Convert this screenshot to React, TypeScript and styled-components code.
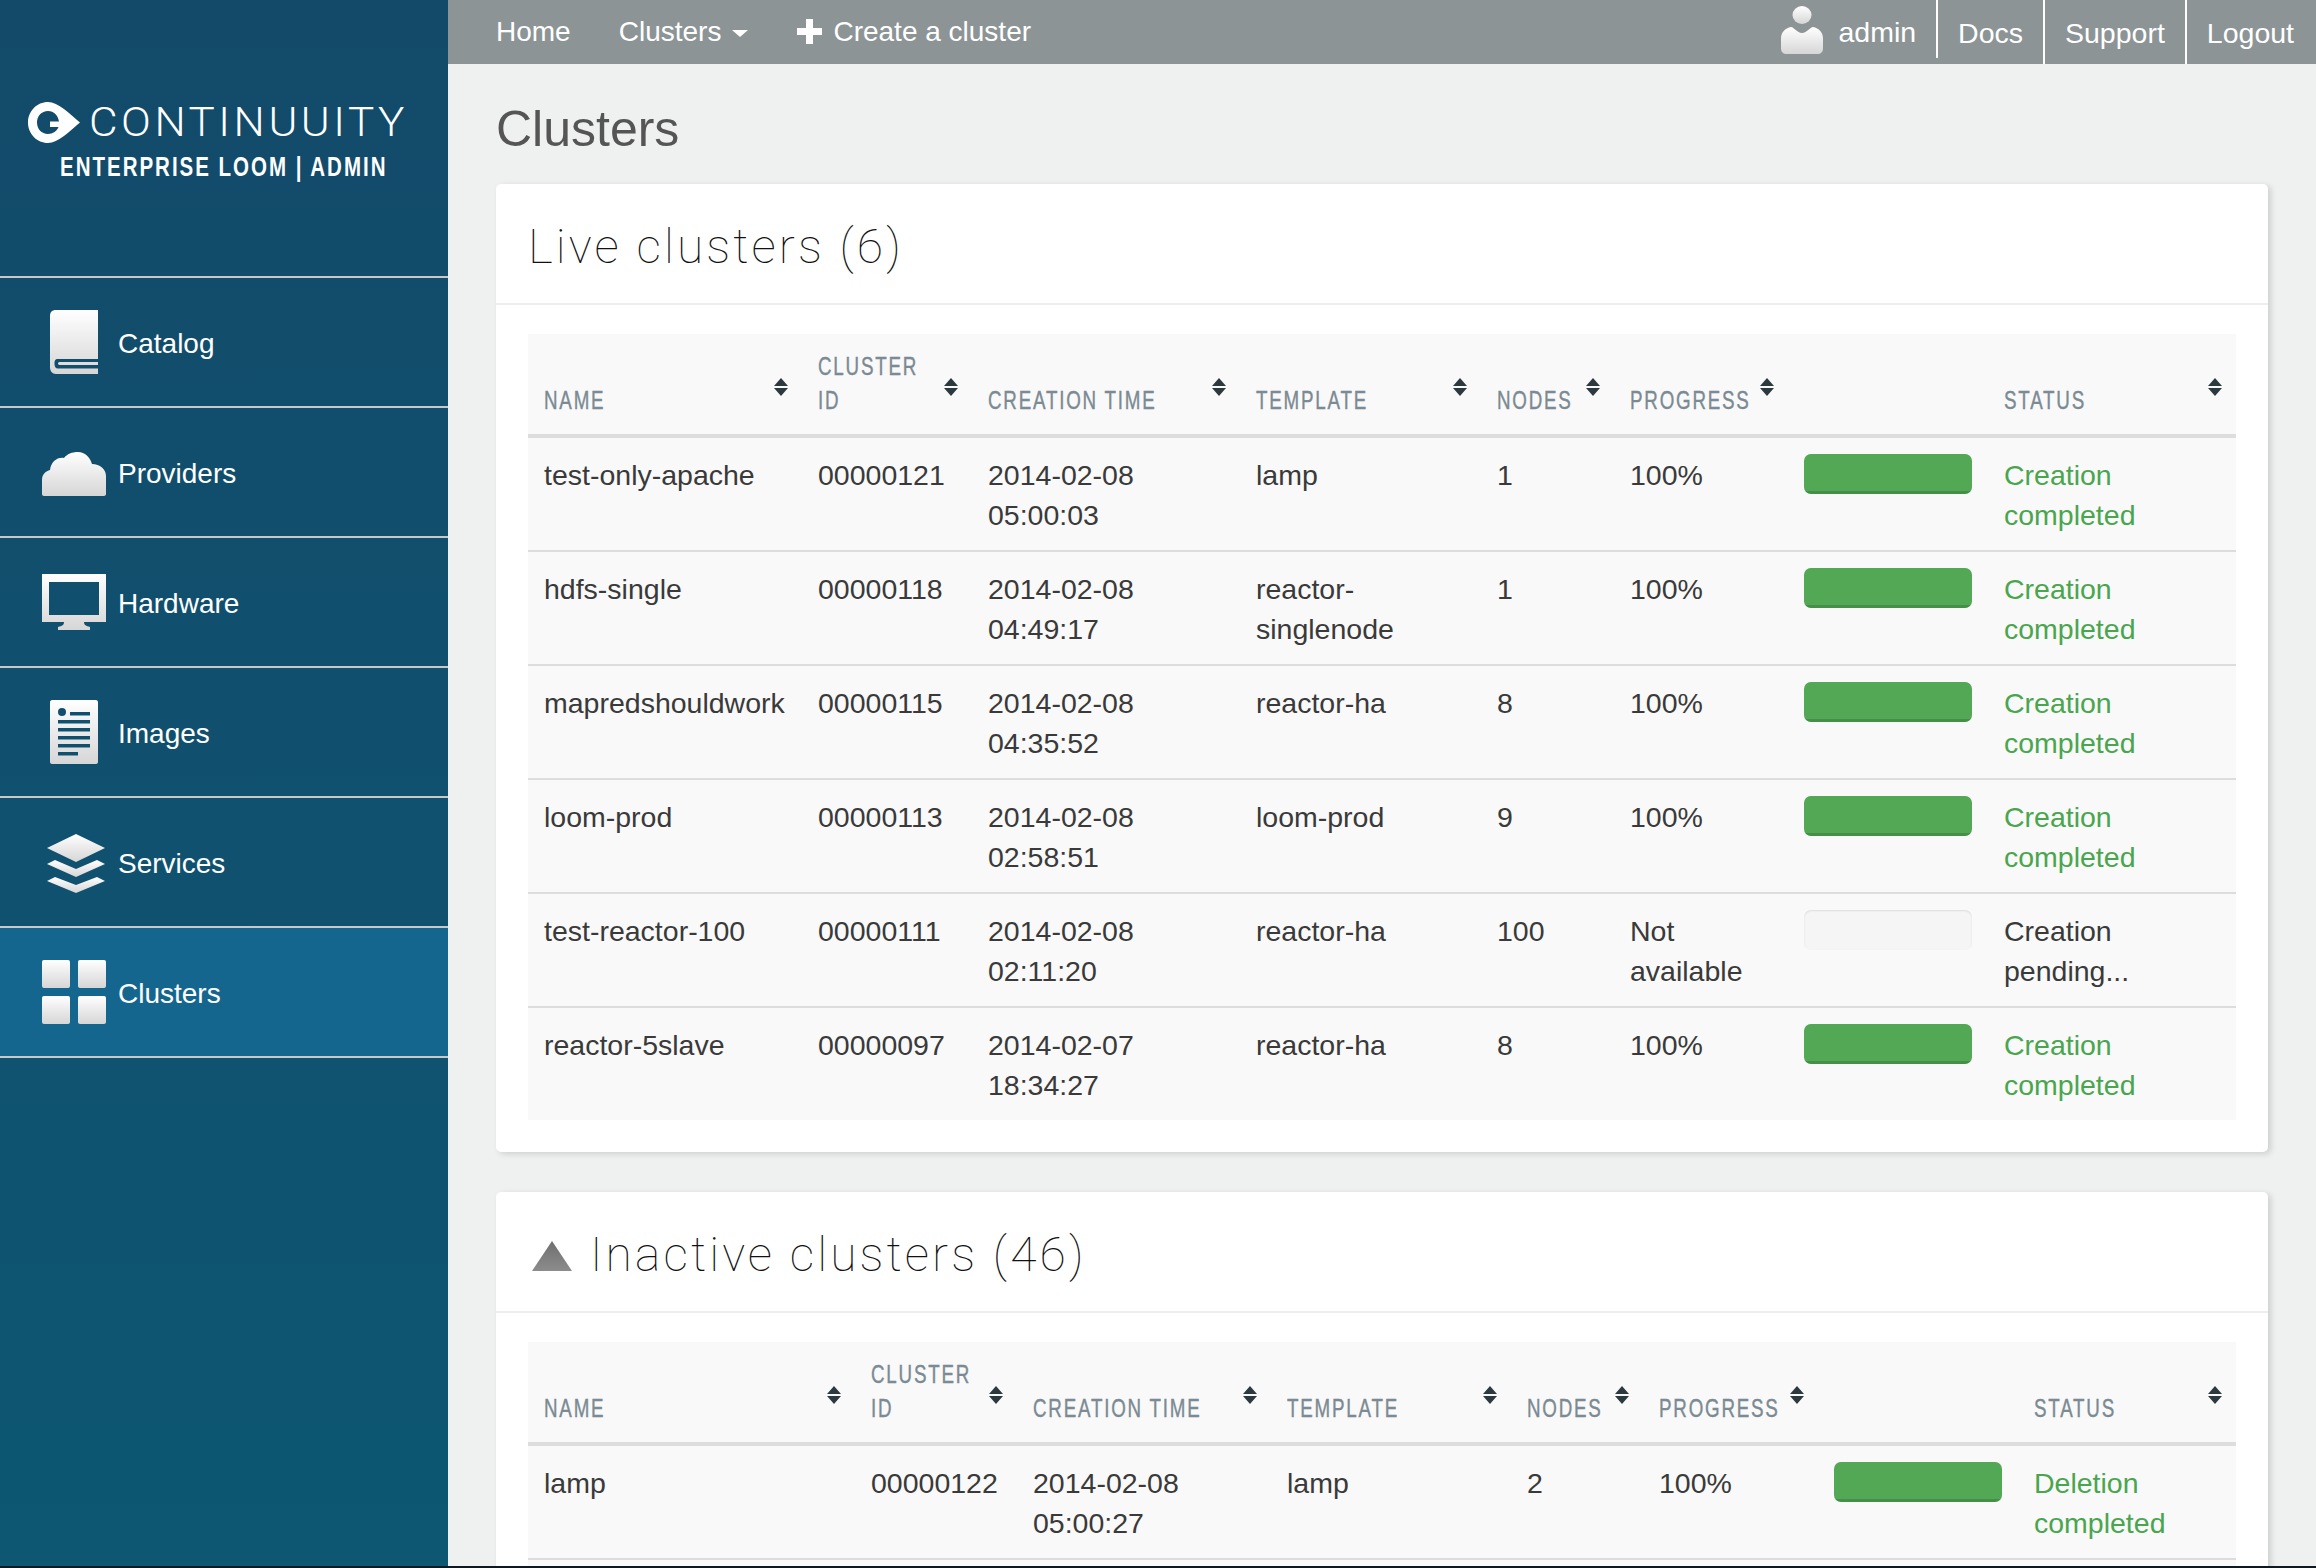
import React from 'react';
import styled, { createGlobalStyle } from 'styled-components';

const GlobalStyle = createGlobalStyle`
  html, body {
    margin: 0;
    padding: 0;
    height: 100%;
    overflow: hidden;
    background: #eff1f0;
  }
  body {
    font-family: "Liberation Sans", Arial, sans-serif;
    font-size: 28px;
    line-height: 40px;
    color: #333;
  }
`;

const Page = styled.div`
  display: grid;
  grid-template-columns: 448px 1fr;
  height: 1566px;
  overflow: hidden;
`;

const BottomStrip = styled.div`
  height: 2px;
  background: #0e1a20;
`;

const Sidebar = styled.aside`
  background: linear-gradient(180deg, #134a6a 0%, #0c5873 100%);
  display: flex;
  flex-direction: column;
`;

const Brand = styled.div`
  height: 278px;
  box-sizing: border-box;
  padding: 102px 0 0 28px;
  border-bottom: 2px solid #c8c8c8;
  color: #fff;
`;

const LogoRow = styled.div`
  display: flex;
  align-items: center;
  gap: 9px;
  height: 41px;
`;

const WordMark = styled.span`
  display: block;
  font-family: Roboto, sans-serif;
  font-weight: 300;
  font-size: 40px;
  line-height: 45px;
  letter-spacing: 3.2px;
  transform: scaleX(1.1);
  transform-origin: 0 0;
`;

const SubMark = styled.div`
  font-weight: 700;
  font-size: 27px;
  line-height: 30px;
  letter-spacing: 2.6px;
  margin: 9px 0 0 32px;
  white-space: nowrap;
  transform: scaleX(0.76);
  transform-origin: 0 0;
`;

const NavItem = styled.a<{ $active?: boolean }>`
  display: flex;
  align-items: center;
  gap: 12px;
  height: 128px;
  padding-left: 42px;
  border-bottom: 2px solid #c8c8c8;
  background: ${p => (p.$active ? '#15668e' : 'transparent')};
  color: #fff;
`;

const NavLabel = styled.span`
  margin-top: 3px;
`;

const NavIcon = styled.svg`
  width: 64px;
  height: 64px;
  flex: none;
`;

const Column = styled.div`
  display: flex;
  flex-direction: column;
  min-width: 0;
`;

const TopBar = styled.nav`
  display: flex;
  height: 64px;
  flex: none;
  background: #8c9496;
  color: #fff;
  padding-left: 48px;
`;

const TopLinks = styled.div`
  display: flex;
  align-items: center;
  gap: 48px;
  flex: 1;
`;

const TopLink = styled.a`
  display: flex;
  align-items: center;
  line-height: 66px;
  white-space: nowrap;
`;

const Caret = styled.span`
  width: 0;
  height: 0;
  margin: 2px 0 0 11px;
  border-left: 8px solid transparent;
  border-right: 8px solid transparent;
  border-top: 7px solid #fff;
`;

const PlusIcon = styled.svg`
  width: 25px;
  height: 25px;
  margin: -2px 11px 0 1px;
`;

const TopRight = styled.div`
  display: flex;
  align-items: flex-start;
  font-size: 28.5px;
`;

const UserCell = styled.div`
  display: flex;
  align-items: center;
  height: 58px;
  box-sizing: border-box;
  padding: 6px 20px 0 0;
  border-right: 2px solid #fff;
`;

const UserIcon = styled.svg`
  width: 42px;
  height: 48px;
  margin: 0 15px 4px 0;
`;

const RightLink = styled.a<{ $last?: boolean }>`
  display: flex;
  align-items: center;
  height: 64px;
  box-sizing: border-box;
  padding: 2px ${p => (p.$last ? '22px' : '20px')} 0 20px;
  border-right: ${p => (p.$last ? 'none' : '2px solid #fff')};
`;

const Main = styled.main`
  flex: 1;
  min-height: 0;
  overflow: hidden;
  padding: 0 48px;
`;

const PageTitle = styled.h1`
  margin: 0;
  height: 120px;
  font-size: 50px;
  font-weight: 400;
  line-height: 131px;
  color: #555;
`;

const Card = styled.section`
  background: #fff;
  border-radius: 5px;
  box-shadow: 3px 2px 6px rgba(0, 0, 0, 0.14);
  margin-bottom: 40px;
`;

const CardHeader = styled.header`
  display: flex;
  align-items: center;
  gap: 18px;
  height: 119px;
  padding: 0 32px;
  border-bottom: 2px solid #eee;
`;

const CardTitle = styled.h2`
  margin: 6px 0 0;
  font-family: Roboto, sans-serif;
  font-weight: 100;
  font-size: 48px;
  letter-spacing: 3.1px;
  color: #111;
`;

const CollapseIcon = styled.svg`
  width: 40px;
  height: 30px;
  margin: 8px 0 0 4px;
`;

const CardBody = styled.div`
  padding: 29px 32px 32px;
`;

const Table = styled.table`
  width: 100%;
  table-layout: fixed;
  border-collapse: separate;
  border-spacing: 0;
  background: #f9f9f9;
  font-size: 28.5px;
`;

const Th = styled.th`
  height: 100px;
  padding: 0;
  border-bottom: 4px solid #ddd;
  text-align: left;
  font-weight: 400;
`;

const ThInner = styled.div`
  display: flex;
  align-items: flex-end;
  justify-content: space-between;
  padding: 14px 14px 17px 16px;
  height: 100px;
  box-sizing: border-box;
`;

const ThLabel = styled.span`
  flex: 1;
  min-width: 0;
  display: block;
  font-size: 25px;
  line-height: 34px;
  letter-spacing: 2.4px;
  color: #7b8a93;
  -webkit-text-stroke: 0.4px #7b8a93;
  text-transform: uppercase;
  white-space: pre;
  transform: scaleX(0.75);
  transform-origin: 0 0;
`;

const SortIcon = styled.svg`
  width: 14px;
  height: 18px;
  flex: none;
  align-self: center;
  margin-top: 8px;
`;

const Td = styled.td<{ $status?: 'done' | 'pending' }>`
  padding: 17px 16px 15px;
  vertical-align: top;
  border-bottom: 2px solid #ddd;
  color: ${p => (p.$status === 'done' ? '#4aa64e' : '#3a3a3a')};

  tr:last-child > & {
    border-bottom: none;
  }
`;

const BarCell = styled(Td)`
  padding-top: 16px;
`;

const Bar = styled.div`
  height: 40px;
  border-radius: 7px;
  background: #f5f5f5;
  box-shadow: inset 0 1px 2px rgba(0, 0, 0, 0.1);
  overflow: hidden;
`;

const BarFill = styled.div`
  height: 100%;
  background: #52a855;
  box-shadow: inset 0 -3px 0 rgba(0, 0, 0, 0.15);
`;

type Row = {
  name: string;
  id: string;
  time: string;
  template: string;
  nodes: string;
  progress: string;
  fill: number;
  status: string;
};

const liveRows: Row[] = [
  { name: 'test-only-apache', id: '00000121', time: '2014-02-08 05:00:03', template: 'lamp', nodes: '1', progress: '100%', fill: 100, status: 'Creation completed' },
  { name: 'hdfs-single', id: '00000118', time: '2014-02-08 04:49:17', template: 'reactor-singlenode', nodes: '1', progress: '100%', fill: 100, status: 'Creation completed' },
  { name: 'mapredshouldwork', id: '00000115', time: '2014-02-08 04:35:52', template: 'reactor-ha', nodes: '8', progress: '100%', fill: 100, status: 'Creation completed' },
  { name: 'loom-prod', id: '00000113', time: '2014-02-08 02:58:51', template: 'loom-prod', nodes: '9', progress: '100%', fill: 100, status: 'Creation completed' },
  { name: 'test-reactor-100', id: '00000111', time: '2014-02-08 02:11:20', template: 'reactor-ha', nodes: '100', progress: 'Not available', fill: 0, status: 'Creation pending...' },
  { name: 'reactor-5slave', id: '00000097', time: '2014-02-07 18:34:27', template: 'reactor-ha', nodes: '8', progress: '100%', fill: 100, status: 'Creation completed' },
];

// second row only exists so the table runs on past the fold, as it does in the real list
const inactiveRows: Row[] = [
  { name: 'lamp', id: '00000122', time: '2014-02-08 05:00:27', template: 'lamp', nodes: '2', progress: '100%', fill: 100, status: 'Deletion completed' },
  { name: '', id: '', time: '', template: '', nodes: '', progress: '', fill: 0, status: '' },
];

const Gradient = ({ id }: { id: string }) => (
  <defs>
    <linearGradient id={id} x1="0" y1="0" x2="0" y2="1">
      <stop offset="0" stopColor="#ffffff" />
      <stop offset="1" stopColor="#d6d6d6" />
    </linearGradient>
  </defs>
);

const BookGlyph = () => (
  <NavIcon viewBox="0 0 64 64">
    <Gradient id="g-book" />
    <path
      fill="url(#g-book)"
      d="M14 0H56V64H14C10 64 8 61 8 57V6C8 2 10 0 14 0ZM16 49C13 49 12.500 51 12.500 53.500C12.500 57 13.500 58.500 16 58.500H56V55H17.500C15.500 55 15.500 52 17.500 52H56V49Z"
    />
  </NavIcon>
);

const CloudGlyph = () => (
  <NavIcon viewBox="0 0 64 64">
    <Gradient id="g-cloud" />
    <path
      fill="url(#g-cloud)"
      d="M2 56C0.800 56 0 55 0 54V40C0 34 4 31 8 30C9 22 15 17 22 18C25 14 30 12 36 12C43 12 48 17 50 24C58 24 64 29 64 36V54C64 55 63 56 62 56Z"
    />
  </NavIcon>
);

const MonitorGlyph = () => (
  <NavIcon viewBox="0 0 64 64">
    <Gradient id="g-mon" />
    <path
      fill="url(#g-mon)"
      fillRule="evenodd"
      d="M0 4H64V52H42C42 55 44 56 48 57V60H16V57C20 56 22 55 22 52H0ZM7 12V45H57V12Z"
    />
  </NavIcon>
);

const DocGlyph = () => (
  <NavIcon viewBox="0 0 64 64">
    <Gradient id="g-doc" />
    <path
      fill="url(#g-doc)"
      fillRule="evenodd"
      d="M10 0H54C55 0 56 1 56 2V62C56 63 55 64 54 64H10C9 64 8 63 8 62V2C8 1 9 0 10 0ZM20 8A4 4 0 1 0 20 16A4 4 0 1 0 20 8ZM28 12V15.500H48V12ZM16 20V23.500H48V20ZM16 28V31.500H48V28ZM16 36V39.500H48V36ZM16 44V47.500H48V44ZM16 52V55.500H36V52Z"
    />
  </NavIcon>
);

const LayersGlyph = () => (
  <NavIcon viewBox="0 0 64 64">
    <Gradient id="g-lay" />
    <path fill="url(#g-lay)" d="M34 4L63 18L34 32L5 18Z" />
    <path fill="url(#g-lay)" d="M5 34L13 30L34 39L55 30L63 34L34 47Z" />
    <path fill="url(#g-lay)" d="M5 51L13 47L34 55L55 47L63 51L34 63Z" />
  </NavIcon>
);

const GridGlyph = () => (
  <NavIcon viewBox="0 0 64 64">
    <Gradient id="g-grid" />
    <g fill="url(#g-grid)">
      <rect x="0" y="0" width="28" height="28" rx="2" />
      <rect x="36" y="0" width="28" height="28" rx="2" />
      <rect x="0" y="36" width="28" height="28" rx="2" />
      <rect x="36" y="36" width="28" height="28" rx="2" />
    </g>
  </NavIcon>
);

const Sort = () => (
  <SortIcon viewBox="0 0 14 18">
    <path fill="#2c3a40" d="M7 0L14 8H0Z" />
    <path fill="#2c3a40" d="M0 10H14L7 18Z" />
  </SortIcon>
);

const ClusterTable = ({ widths, rows }: { widths: number[]; rows: Row[] }) => (
  <Table>
    <colgroup>
      {widths.map((w, i) => (
        <col key={i} style={{ width: w }} />
      ))}
    </colgroup>
    <thead>
      <tr>
        {['Name', 'Cluster\nID', 'Creation time', 'Template', 'Nodes', 'Progress'].map(label => (
          <Th key={label}>
            <ThInner>
              <ThLabel>{label}</ThLabel>
              <Sort />
            </ThInner>
          </Th>
        ))}
        <Th />
        <Th>
          <ThInner>
            <ThLabel>Status</ThLabel>
            <Sort />
          </ThInner>
        </Th>
      </tr>
    </thead>
    <tbody>
      {rows.map((row, i) => (
        <tr key={i}>
          <Td>{row.name}</Td>
          <Td>{row.id}</Td>
          <Td>{row.time}</Td>
          <Td>{row.template}</Td>
          <Td>{row.nodes}</Td>
          <Td>{row.progress}</Td>
          <BarCell>
            <Bar>{row.fill > 0 && <BarFill style={{ width: `${row.fill}%` }} />}</Bar>
          </BarCell>
          <Td $status={row.fill === 100 ? 'done' : 'pending'}>{row.status}</Td>
        </tr>
      ))}
    </tbody>
  </Table>
);

const navItems = [
  { label: 'Catalog', icon: <BookGlyph /> },
  { label: 'Providers', icon: <CloudGlyph /> },
  { label: 'Hardware', icon: <MonitorGlyph /> },
  { label: 'Images', icon: <DocGlyph /> },
  { label: 'Services', icon: <LayersGlyph /> },
  { label: 'Clusters', icon: <GridGlyph />, active: true },
];

const App: React.FC = () => (
  <>
    <GlobalStyle />
    <Page>
      <Sidebar>
        <Brand>
          <LogoRow>
            <svg width="52" height="41" viewBox="0 0 52 41">
              <path
                fill="#fff"
                fillRule="evenodd"
                d="M20 0C30 0 42 12 52 20.500C42 29 30 41 20 41C9 41 0 32 0 20.500C0 9 9 0 20 0ZM20 9C13.500 9 9 14 9 20.500C9 27 13.500 32 20 32C25 32 29 29 30.500 25H22V19.500H31C30 13.500 26 9 20 9Z"
              />
            </svg>
            <WordMark>CONTINUUITY</WordMark>
          </LogoRow>
          <SubMark>ENTERPRISE LOOM | ADMIN</SubMark>
        </Brand>
        {navItems.map(item => (
          <NavItem key={item.label} $active={item.active}>
            {item.icon}
            <NavLabel>{item.label}</NavLabel>
          </NavItem>
        ))}
      </Sidebar>
      <Column>
        <TopBar>
          <TopLinks>
            <TopLink>Home</TopLink>
            <TopLink>
              Clusters
              <Caret />
            </TopLink>
            <TopLink>
              <PlusIcon viewBox="0 0 25 25">
                <path fill="#fff" d="M9 0H16V9H25V16H16V25H9V16H0V9H9Z" />
              </PlusIcon>
              Create a cluster
            </TopLink>
          </TopLinks>
          <TopRight>
            <UserCell>
              <UserIcon viewBox="0 0 42 48">
                <Gradient id="g-user" />
                <ellipse cx="21" cy="9" rx="9.500" ry="9" fill="url(#g-user)" />
                <path
                  fill="url(#g-user)"
                  d="M6 48C2 48 0 46 0 42V32C0 27 4 22 10 21C13 21 16 27 21 27C26 27 29 21 32 21C38 22 42 27 42 32V42C42 46 40 48 36 48Z"
                />
              </UserIcon>
              admin
            </UserCell>
            <RightLink>Docs</RightLink>
            <RightLink>Support</RightLink>
            <RightLink $last>Logout</RightLink>
          </TopRight>
        </TopBar>
        <Main>
          <PageTitle>Clusters</PageTitle>
          <Card>
            <CardHeader>
              <CardTitle>Live clusters (6)</CardTitle>
            </CardHeader>
            <CardBody>
              <ClusterTable widths={[274, 170, 268, 241, 133, 174, 200, 248]} rows={liveRows} />
            </CardBody>
          </Card>
          <Card>
            <CardHeader>
              <CollapseIcon viewBox="0 0 40 30">
                <defs>
                  <linearGradient id="g-tri" x1="0" y1="0" x2="0" y2="1">
                    <stop offset="0" stopColor="#6f6f6f" />
                    <stop offset="1" stopColor="#8c8c8c" />
                  </linearGradient>
                </defs>
                <path fill="url(#g-tri)" d="M20 0L40 30H0Z" />
              </CollapseIcon>
              <CardTitle>Inactive clusters (46)</CardTitle>
            </CardHeader>
            <CardBody>
              <ClusterTable widths={[327, 162, 254, 240, 132, 175, 200, 218]} rows={inactiveRows} />
            </CardBody>
          </Card>
        </Main>
      </Column>
    </Page>
    <BottomStrip />
  </>
);

export default App;
